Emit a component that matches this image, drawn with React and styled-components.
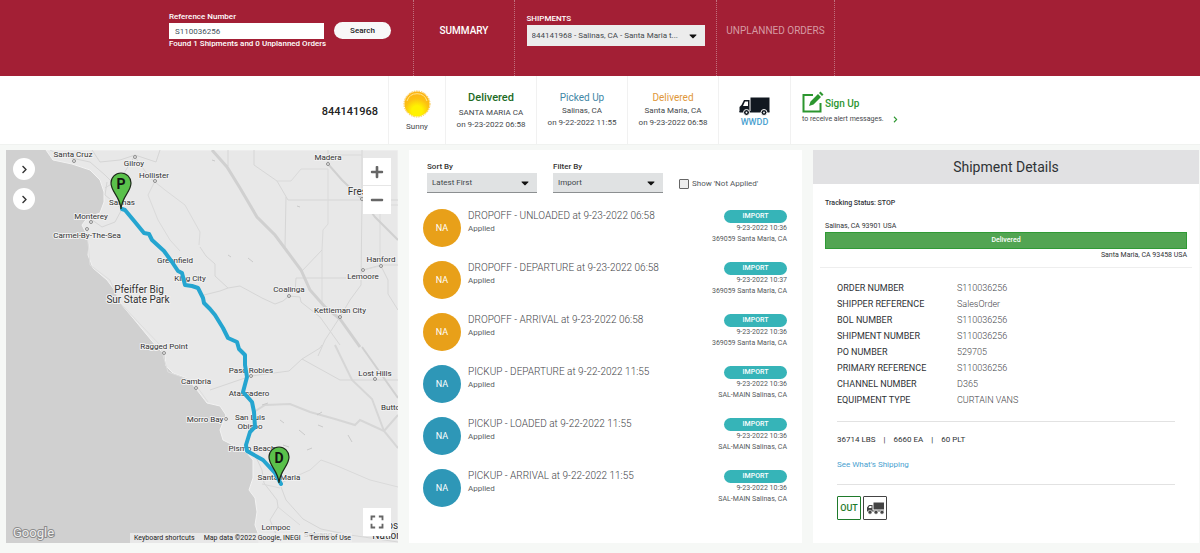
import React from 'react'
import styled, { createGlobalStyle } from 'styled-components'
import { FaCaretDown, FaChevronRight, FaMinus, FaPlus } from 'react-icons/fa'
import { MdFullscreen } from 'react-icons/md'

const GlobalStyle = createGlobalStyle`
    * {
        box-sizing:border-box;
    }
    body {
        margin:0;
        background-color:#f6f8f6;
        color:#2f3336;
        font-family:Roboto, "Liberation Sans", sans-serif;
        font-size:8px;
        line-height:12px;
    }
    button, input, select {
        font-family:inherit;
        margin:0;
    }
    h1, h2, h3, p, ul, dl, dd {
        margin:0;
        padding:0;
    }
`

/* top bar */

const TopBar = styled.header`
    display:grid;
    grid-template-columns:minmax(391px, 414fr) 101px 202px 118px minmax(0, 365fr);
    min-height:76px;
    background-color:#a31f35;
    color:#fff;
`

const TopCell = styled.div`
    display:flex;
    justify-content:${({ $justify }) => $justify || 'center'};
    align-items:flex-start;
    padding:${({ $padding }) => $padding || '0'};
    border-right:${({ $last }) => ($last ? 'none' : '1px dotted #c0707d')};
`

const SearchForm = styled.form`
    display:flex;
    gap:10px;
`

const Field = styled.div`
    display:flex;
    flex-direction:column;
    width:${({ $width }) => $width}px;
`

const TopLabel = styled.label`
    font-size:8px;
    line-height:12px;
    font-weight:500;
`

const SearchInput = styled.input`
    width:100%;
    height:16px;
    padding:0 6px;
    border:none;
    background-color:#fff;
    color:#44525c;
    font-size:8px;
`

const FoundText = styled.p`
    font-size:8px;
    line-height:10px;
    font-weight:500;
    white-space:nowrap;
`

const SearchButton = styled.button`
    align-self:flex-start;
    width:57px;
    height:17px;
    margin-top:11px;
    padding:0;
    border:none;
    border-radius:9px;
    background-color:#f8f8f8;
    color:#222;
    font-size:8px;
    font-weight:500;
`

const TopLink = styled.a`
    color:${({ $dim }) => ($dim ? '#d69aa3' : '#fff')};
    font-size:10px;
    line-height:12px;
    font-weight:${({ $dim }) => ($dim ? 400 : 500)};
    text-decoration:none;
    white-space:nowrap;
`

/* select with its own arrow */

const SelectWrap = styled.div`
    display:grid;
    align-items:center;
    height:${({ $tall }) => ($tall ? 21 : 20)}px;
    background-color:${({ $tall }) => ($tall ? '#ececec' : '#e0e2e3')};
    border-bottom:${({ $tall }) => ($tall ? 'none' : '1px solid #8c8f91')};
    color:#111;

    > * {
        grid-area:1 / 1;
    }
    > svg {
        justify-self:end;
        margin-right:6px;
        pointer-events:none;
    }
`

const Select = styled.select`
    appearance:none;
    width:100%;
    height:100%;
    padding:0 17px 0 5px;
    border:none;
    border-radius:0;
    background:transparent;
    color:#43484c;
    font-size:8px;
    text-overflow:ellipsis;
`

/* status strip */

const StatusStrip = styled.section`
    display:grid;
    grid-template-columns:minmax(0, 389fr) 57px 91px 91px 91px 72px minmax(0, 409fr);
    min-height:69px;
    background-color:#fff;
    border-bottom:1px solid #f0f2f0;
`

const StatusCell = styled.div`
    display:flex;
    flex-direction:column;
    align-items:${({ $align }) => $align || 'center'};
    gap:${({ $gap }) => $gap || 0}px;
    padding:${({ $padding }) => $padding || '15px 0 0'};
    border-right:${({ $last }) => ($last ? 'none' : '1px solid #f1f1f1')};
    white-space:nowrap;
`

const ShipmentNumber = styled.h1`
    color:#222;
    font-size:11px;
    line-height:14px;
    font-weight:500;
`

const StatusTitle = styled.h2`
    margin-bottom:${({ $bold }) => ($bold ? 2 : 0)}px;
    color:${({ $color }) => $color};
    font-size:${({ $bold }) => ($bold ? 11 : 10)}px;
    line-height:14px;
    font-weight:${({ $bold }) => ($bold ? 500 : 400)};
`

const StatusText = styled.p`
    color:#44484b;
    font-size:8px;
    line-height:12px;
`

const Carrier = styled.a`
    color:#4a9fd0;
    font-size:9px;
    line-height:12px;
    font-weight:500;
    text-decoration:none;
`

const SignUpLink = styled.a`
    display:flex;
    align-items:flex-end;
    gap:1px;
    color:#2c962f;
    font-size:10px;
    line-height:18px;
    font-weight:500;
    text-decoration:none;
`

const SignUpNote = styled.p`
    display:flex;
    align-items:center;
    gap:8px;
    color:#44484b;
    font-size:7px;
    line-height:12px;

    svg {
        color:#2c962f;
    }
`

/* panels */

const Panels = styled.main`
    display:grid;
    grid-template-columns:minmax(0, 392fr) minmax(0, 393fr) minmax(0, 386fr);
    gap:11px;
    padding:5px 1px 10px 6px;
`

const Panel = styled.section`
    min-height:393px;
    background-color:#fff;
`

const MapPanel = styled(Panel)`
    position:relative;
    overflow:hidden;
    background-color:#d0d0d0;
`

const MapDrawing = styled.svg`
    position:absolute;
    width:100%;
    height:100%;
`

const MapTools = styled.div`
    position:absolute;
    display:flex;
    flex-direction:column;
    gap:${({ $gap }) => $gap || 0}px;
    ${({ $place }) => $place}
`

const RoundButton = styled.button`
    display:flex;
    justify-content:center;
    align-items:center;
    width:22px;
    height:22px;
    padding:0;
    border:none;
    border-radius:50%;
    background-color:#fff;
    color:#333;
`

const SquareButton = styled.button`
    display:flex;
    justify-content:center;
    align-items:center;
    width:28px;
    height:28px;
    padding:0;
    border:none;
    border-bottom:${({ $divided }) => ($divided ? '1px solid #e6e6e6' : 'none')};
    background-color:#fff;
    color:#666;
`

const GoogleMark = styled.a`
    position:absolute;
    left:7px;
    bottom:1px;
    color:#eee;
    font-size:13px;
    line-height:18px;
    text-decoration:none;
    -webkit-text-stroke:2px #8c8c8c;
    paint-order:stroke fill;
`

const MapCredits = styled.div`
    position:absolute;
    right:46px;
    bottom:0;
    display:flex;
    gap:9px;
    padding:0 1px 0 4px;
    background-color:rgba(238,238,238,0.8);
    color:#222;
    font-size:7px;
    line-height:10px;
    white-space:nowrap;

    a {
        color:inherit;
        text-decoration:none;
    }
`

const MapLabel = styled.text`
    fill:#333;
    stroke:#f1f1f1;
    stroke-width:2px;
    stroke-linejoin:round;
    paint-order:stroke;
    font-size:${({ $big }) => ($big ? 10 : 8)}px;
    text-anchor:middle;
`

/* event list */

const Filters = styled.div`
    display:flex;
    align-items:flex-end;
    gap:16px;
    padding:11px 14px 0 18px;
`

const FilterField = styled(Field)`
    width:110px;
`

const FilterLabel = styled.label`
    color:#333;
    font-size:8px;
    line-height:12px;
    font-weight:500;
`

const CheckLabel = styled.label`
    display:flex;
    align-items:center;
    gap:3px;
    color:#55595c;
    font-size:8px;
    line-height:18px;
    white-space:nowrap;
`

const CheckBox = styled.input`
    appearance:none;
    width:10px;
    height:10px;
    margin:0;
    border:1px solid #666;
    border-radius:1px;
    background-color:#eee;
`

const EventList = styled.ul`
    display:flex;
    flex-direction:column;
    gap:14px;
    padding:16px 15px 0 14px;
    list-style:none;
`

const EventRow = styled.li`
    display:flex;
    gap:7px;
    height:38px;
`

const Avatar = styled.span`
    display:flex;
    justify-content:center;
    align-items:center;
    flex:none;
    width:38px;
    height:38px;
    border-radius:50%;
    background-color:${({ $pickup }) => ($pickup ? '#2e97b7' : '#e8a019')};
    color:#fff;
    font-size:9px;
`

const EventBody = styled.div`
    flex:1;
    min-width:0;
`

const EventTitle = styled.h3`
    color:#3f4448;
    font-size:10px;
    line-height:14px;
    font-weight:300;
`

const EventState = styled.p`
    color:#5a5f63;
    font-size:8px;
    line-height:12px;
`

const EventSide = styled.div`
    display:flex;
    flex-direction:column;
    align-items:flex-end;
    padding-top:1px;
    color:#55595c;
    font-size:7px;
    line-height:11px;
`

const Tag = styled.span`
    width:63px;
    border-radius:7px;
    background-color:#36b4b8;
    color:#fff;
    font-size:7px;
    line-height:13px;
    font-weight:500;
    text-align:center;
`

/* shipment details */

const DetailsTitle = styled.h2`
    background-color:#e1e1e3;
    color:#2f3336;
    font-size:14px;
    line-height:34px;
    font-weight:400;
    text-align:center;
`

const Tracking = styled.div`
    margin:0 7px;
    padding:13px 5px 6px;
    border-bottom:1px solid #eee;
    font-size:7px;
    line-height:12px;
`

const TrackingStatus = styled.p`
    margin-bottom:11px;
    font-weight:500;
`

const Progress = styled.div`
    border:1px solid #2f9a35;
    background-color:#52a552;
    color:#fff;
    line-height:15px;
    font-weight:500;
    text-align:center;
`

const Destination = styled.p`
    text-align:right;
`

const DetailsBody = styled.div`
    padding:12px 24px 0;
`

const DataList = styled.dl`
    display:grid;
    grid-template-columns:120px 1fr;
    padding-bottom:13px;
    border-bottom:1px solid #e2e2e2;
    font-size:9px;
    line-height:16px;

    dd {
        color:#3f4448;
        font-weight:300;
    }
`

const Totals = styled.p`
    display:flex;
    gap:8px;
    padding:12px 0 13px;
`

const DetailsLink = styled.a`
    display:block;
    padding-bottom:13px;
    border-bottom:1px solid #e2e2e2;
    color:#4a9fd0;
    font-size:8px;
    text-decoration:none;
`

const Badges = styled.div`
    display:flex;
    gap:2px;
    padding-top:11px;
`

const Badge = styled.span`
    display:flex;
    justify-content:center;
    align-items:center;
    width:24px;
    height:24px;
    border:1px solid ${({ $color }) => $color};
    border-radius:1px;
    color:${({ $color }) => $color};
    font-size:9px;
    font-weight:500;
`

const events = [
    { title: 'DROPOFF - UNLOADED at 9-23-2022 06:58', time: '9-23-2022 10:36', place: '369059 Santa Maria, CA' },
    { title: 'DROPOFF - DEPARTURE at 9-23-2022 06:58', time: '9-23-2022 10:37', place: '369059 Santa Maria, CA' },
    { title: 'DROPOFF - ARRIVAL at 9-23-2022 06:58', time: '9-23-2022 10:36', place: '369059 Santa Maria, CA' },
    { title: 'PICKUP - DEPARTURE at 9-22-2022 11:55', time: '9-23-2022 10:36', place: 'SAL-MAIN Salinas, CA', pickup: true },
    { title: 'PICKUP - LOADED at 9-22-2022 11:55', time: '9-23-2022 10:36', place: 'SAL-MAIN Salinas, CA', pickup: true },
    { title: 'PICKUP - ARRIVAL at 9-22-2022 11:55', time: '9-23-2022 10:36', place: 'SAL-MAIN Salinas, CA', pickup: true },
]

const details = [
    ['ORDER NUMBER', 'S110036256'],
    ['SHIPPER REFERENCE', 'SalesOrder'],
    ['BOL NUMBER', 'S110036256'],
    ['SHIPMENT NUMBER', 'S110036256'],
    ['PO NUMBER', '529705'],
    ['PRIMARY REFERENCE', 'S110036256'],
    ['CHANNEL NUMBER', 'D365'],
    ['EQUIPMENT TYPE', 'CURTAIN VANS'],
]

// label, x, y, big
const places = [
    ['Santa Cruz', 73, 157],
    ['Gilroy', 134, 166],
    ['Hollister', 154, 178],
    ['Salinas', 122, 205],
    ['Monterey', 91, 219],
    ['Carmel-By-The-Sea', 87, 238],
    ['Greenfield', 175, 263],
    ['King City', 190, 281],
    ['Pfeiffer Big', 139, 293, true],
    ['Sur State Park', 138, 303, true],
    ['Ragged Point', 164, 349],
    ['Cambria', 196, 384],
    ['Morro Bay', 205, 422],
    ['Paso Robles', 251, 373],
    ['Atascadero', 249, 396],
    ['San Luis', 250, 420],
    ['Obispo', 250, 429],
    ['Pismo Beach', 252, 451],
    ['Santa Maria', 279, 480],
    ['Lompoc', 276, 530],
    ['Solvang', 318, 537],
    ['Madera', 328, 160],
    ['Fresno', 363, 195, true],
    ['Hanford', 381, 262],
    ['Lemoore', 363, 279],
    ['Coalinga', 289, 292],
    ['Kettleman City', 340, 313],
    ['Lost Hills', 375, 376],
    ['Buttonwillow', 404, 410],
    ['Los', 390, 529, true],
    ['National', 391, 539, true],
]

const towns = [
    [74, 161], [135, 157], [155, 181], [91, 222], [87, 229], [328, 164], [362, 199], [381, 266],
    [363, 270], [289, 296], [340, 317], [375, 379], [164, 353], [196, 388], [226, 419], [251, 376],
]

const Pin = ({ x, y, letter }) => (
    <g transform={`translate(${x} ${y})`}>
        <path d="M0 0 C-1 -13 -10 -17 -10 -26 A10 10 0 0 1 10 -26 C10 -17 1 -13 0 0 Z" fill="#5ac14b" stroke="#1d2a1a" strokeWidth="1.2" />
        <text y="-20" textAnchor="middle" fontSize="14" fontWeight="700" fill="#111">{letter}</text>
    </g>
)

const Truck = () => (
    <svg width="31" height="19" viewBox="0 0 31 19" fill="#111820" aria-hidden="true">
        <path d="M11.5 0.500 H30.500 V14.500 H11.500 Z" />
        <path d="M10.500 3 H5 L2.500 8 L0.500 10 V15 H10.500 Z M9 4.500 V9 H4 L6 4.500 Z" fillRule="evenodd" />
        <path d="M0.500 14 H30.500 V15.500 H0.500 Z" />
        <circle cx="7.500" cy="15.500" r="3" stroke="#fff" />
        <circle cx="25" cy="15.500" r="3" stroke="#fff" />
        <circle cx="7.500" cy="15.500" r="0.900" fill="#fff" />
        <circle cx="25" cy="15.500" r="0.900" fill="#fff" />
    </svg>
)

const SmallTruck = () => (
    <svg width="19" height="13" viewBox="0 0 19 13" fill="#444" aria-hidden="true">
        <path d="M7.500 0.500 H18 V7.500 H7.500 Z" />
        <path d="M6.500 3 H3 L1 5.500 V9.500 H18 V8.500 H6.500 Z M5.500 4 V6 H2.500 L3.500 4 Z" fillRule="evenodd" />
        <circle cx="4" cy="10.200" r="2" stroke="#fff" strokeWidth="0.600" />
        <circle cx="10" cy="10.200" r="2" stroke="#fff" strokeWidth="0.600" />
        <circle cx="16" cy="10.200" r="2" stroke="#fff" strokeWidth="0.600" />
    </svg>
)

const SignUpIcon = () => (
    <svg width="22" height="22" viewBox="0 0 22 22" aria-hidden="true">
        <path d="M11 4 H1.500 V20.500 H18.500 V12" fill="none" stroke="#2c962f" strokeWidth="2" />
        <path d="M7 15 L8.500 10.500 L16 3 L19 6 L11.500 13.500 Z M17 2 L18.500 0.500 L21.500 3.500 L20 5 Z" fill="#2c962f" />
    </svg>
)

const Sun = () => (
    <svg width="28" height="28" viewBox="0 0 28 28" aria-hidden="true">
        <defs>
            <radialGradient id="sun" cx="50%" cy="78%" r="70%">
                <stop offset="0.3" stopColor="#fff200" />
                <stop offset="0.7" stopColor="#fcc012" />
                <stop offset="1" stopColor="#fdb515" />
            </radialGradient>
        </defs>
        <circle cx="14" cy="14" r="13" fill="none" stroke="#f9c440" strokeDasharray="1.5 1" />
        <circle cx="14" cy="14" r="12.500" fill="url(#sun)" />
        <path d="M4 11 A10.500 10.500 0 0 1 24 11" fill="none" stroke="#ffe58a" />
    </svg>
)

const Dropdown = ({ id, options, tall }) => (
    <SelectWrap $tall={tall}>
        <Select id={id}>
            {options.map((option) => <option key={option}>{option}</option>)}
        </Select>
        <FaCaretDown size={12} />
    </SelectWrap>
)

const RouteMap = () => (
    <MapDrawing viewBox="6 150 392 393" preserveAspectRatio="xMidYMid slice" role="img" aria-label="Route from Salinas to Santa Maria">
        <path
            d="M46 150 L53 160 L72 164 L90 170 L100 180 L104 192 L104 202 L100 213 L88 217 L82 225 L87 235 L89 245 L88 255 L93 268 L107 280 L113 288 L122 305 L133 318 L147 335 L157 347 L165 355 L166 366 L173 373 L187 378 L197 390 L207 403 L220 406 L226 415 L220 430 L223 440 L237 447 L247 453 L253 460 L253 478 L249 490 L255 498 L257 512 L255 525 L258 533 L259 543 H398 V150 Z"
            fill="#e8e8e8"
            stroke="#f2f2f2"
        />
        <g fill="none" stroke="#d6d6d6" strokeWidth="1">
            <path d="M50 150 L62 156 L90 162 L105 175 L120 190 L122 209" />
            <path d="M92 150 L100 162 L120 160 L135 155 L156 162 L160 150 M105 188 L121 178 L134 157 M88 217 L102 227 L115 222 L122 209 M122 209 L105 195 L107 182" />
            <path d="M135 157 L150 178 L165 190 L185 205 L200 232 L199 245 M155 181 L148 195 L158 220 L170 240 L180 251" stroke="#dadada" />
            <path d="M87 230 L90 265 L110 280 L120 303 L160 345 L168 372 L193 381 L208 402" stroke="#dedede" />
            <path d="M200 247 L206 256 L215 264 L215 276 L228 288 M204 295 L220 291 L228 288 L240 286 L262 298 L275 304 L283 301 L289 296 L300 297 L301 302 L320 317 L340 345" />
            <path d="M228 150 V166 M254 150 V165 L277 181 L288 200 H398 M286 197 L285 247" />
            <path d="M277 181 H291 L301 169 H328 V224 L323 230 L322 250 V305" stroke="#dadada" />
            <path d="M328 164 V150 M362 150 V199 L361 285 L350 300 L340 317 L325 340 L318 356" />
            <path d="M296 278 H346 M301 272 L322 250 M296 278 L295 293 M363 270 L381 265 H398 M381 266 L388 280 V294 L398 310" />
            <path d="M398 205 H365 M380 200 V266 L363 270 M330 155 H362" stroke="#dadada" />
            <path d="M251 376 L289 371 L302 359 L320 348 L322 345 M245 378 L210 390 M302 359 L340 380 H398" />
            <path d="M335 345 L352 380 L372 399 L384 431 L398 448 M384 431 L398 415" strokeWidth="2" />
            <path d="M254 412 L265 405 L290 404 L310 412 L335 419 L355 425 L360 420 L384 431" strokeWidth="2" />
            <path d="M255 455 L262 470 L264 483 L277 500 L278 507 L270 520 L276 534 M281 487 L286 500 L303 519 L321 529 L350 535 L398 542" />
            <path d="M281 483 L310 470 L321 460 L335 465 L370 480 L398 487 M262 484 L280 488 M278 507 L300 525" stroke="#dadada" />
        </g>
        <g fill="none" stroke="#d0d0d0" strokeWidth="3">
            <path d="M212 150 L227 167 L240 188 L257 217 L275 235 L301 270 L310 290 L325 307 L340 319 L360 347" />
            <path d="M362 347 L398 398 M328 164 L342 180 L362 199 L375 217 L398 240" strokeWidth="2" />
        </g>
        <path d="M297 206 l3 1 M212 160 l3 1 M228 255 l3 2 M248 258 l5 4 M262 405 l6 -2 M299 430 l6 5 M348 435 l4 7 M318 425 l5 2 M280 420 l4 3 M307 450 l5 -2 M283 445 l6 2 M317 415 l5 -3" stroke="#cacaca" fill="none" />
        {towns.map(([x, y]) => (
            <circle key={`${x}-${y}`} cx={x} cy={y} r="1.500" fill="#e8e8e8" stroke="#777" strokeWidth="0.800" />
        ))}
        {places.map(([label, x, y, big]) => (
            <MapLabel key={label} x={x} y={y} $big={big}>{label}</MapLabel>
        ))}
        <path
            d="M122 209 L125 210 L135 222 L144 233 L149 234 L152 240 L164 251 L172 262 L178 271 L182 273 L185 285 L192 286 L198 288 L203 298 L204 303 L210 309 L215 315 L223 328 L228 338 L237 342 L239 349 L245 355 L245 365 L247 377 L243 392 L252 402 L254 412 L255 427 L250 432 L246 445 L247 451 L263 460 L275 473 L281 484"
            fill="none"
            stroke="#25a5d0"
            strokeWidth="4"
            strokeLinejoin="round"
            strokeLinecap="round"
        />
        <Pin x={121} y={209} letter="P" />
        <Pin x={279} y={483} letter="D" />
    </MapDrawing>
)

const App = () => {
    return (
        <>
            <GlobalStyle />
            <TopBar>
                <TopCell $justify="flex-end" $padding="11px 22px 0 0">
                    <SearchForm>
                        <Field $width={155}>
                            <TopLabel htmlFor="reference">Reference Number</TopLabel>
                            <SearchInput id="reference" defaultValue="S110036256" />
                            <FoundText>Found 1 Shipments and 0 Unplanned Orders</FoundText>
                        </Field>
                        <SearchButton type="button">Search</SearchButton>
                    </SearchForm>
                </TopCell>
                <TopCell $padding="25px 0 0">
                    <TopLink href="#summary">SUMMARY</TopLink>
                </TopCell>
                <TopCell $padding="13px 0 0">
                    <Field $width={178}>
                        <TopLabel htmlFor="shipments">SHIPMENTS</TopLabel>
                        <Dropdown id="shipments" tall options={['844141968 - Salinas, CA - Santa Maria t...']} />
                    </Field>
                </TopCell>
                <TopCell $padding="25px 0 0">
                    <TopLink href="#unplanned" $dim>UNPLANNED ORDERS</TopLink>
                </TopCell>
                <TopCell $last />
            </TopBar>

            <StatusStrip>
                <StatusCell $align="flex-end" $padding="29px 10px 0 0">
                    <ShipmentNumber>844141968</ShipmentNumber>
                </StatusCell>
                <StatusCell $padding="14px 0 0" $gap={3}>
                    <Sun />
                    <StatusText>Sunny</StatusText>
                </StatusCell>
                <StatusCell>
                    <StatusTitle $color="#1d6b26" $bold>Delivered</StatusTitle>
                    <StatusText>SANTA MARIA CA</StatusText>
                    <StatusText>on 9-23-2022 06:58</StatusText>
                </StatusCell>
                <StatusCell>
                    <StatusTitle $color="#3f87a6">Picked Up</StatusTitle>
                    <StatusText>Salinas, CA</StatusText>
                    <StatusText>on 9-22-2022 11:55</StatusText>
                </StatusCell>
                <StatusCell>
                    <StatusTitle $color="#e0973a">Delivered</StatusTitle>
                    <StatusText>Santa Maria, CA</StatusText>
                    <StatusText>on 9-23-2022 06:58</StatusText>
                </StatusCell>
                <StatusCell $padding="21px 0 0">
                    <Truck />
                    <Carrier href="#carrier">WWDD</Carrier>
                </StatusCell>
                <StatusCell $align="flex-start" $padding="15px 0 0 11px" $last>
                    <SignUpLink href="#signup">
                        <SignUpIcon />
                        Sign Up
                    </SignUpLink>
                    <SignUpNote>
                        to receive alert messages.
                        <FaChevronRight size={7} />
                    </SignUpNote>
                </StatusCell>
            </StatusStrip>

            <Panels>
                <MapPanel>
                    <RouteMap />
                    <MapTools $gap={8} $place="top:8px; left:7px;">
                        <RoundButton aria-label="Show stops"><FaChevronRight size={9} /></RoundButton>
                        <RoundButton aria-label="Show layers"><FaChevronRight size={9} /></RoundButton>
                    </MapTools>
                    <MapTools $place="top:8px; right:7px;">
                        <SquareButton aria-label="Zoom in" $divided><FaPlus size={14} /></SquareButton>
                        <SquareButton aria-label="Zoom out"><FaMinus size={14} /></SquareButton>
                    </MapTools>
                    <GoogleMark href="#google">Google</GoogleMark>
                    <MapCredits>
                        <a href="#shortcuts">Keyboard shortcuts</a>
                        <span>Map data ©2022 Google, INEGI</span>
                        <a href="#terms">Terms of Use</a>
                    </MapCredits>
                    <MapTools $place="right:7px; bottom:7px;">
                        <SquareButton aria-label="Full screen"><MdFullscreen size={22} /></SquareButton>
                    </MapTools>
                </MapPanel>

                <Panel>
                    <Filters>
                        <FilterField>
                            <FilterLabel htmlFor="sort">Sort By</FilterLabel>
                            <Dropdown id="sort" options={['Latest First']} />
                        </FilterField>
                        <FilterField>
                            <FilterLabel htmlFor="filter">Filter By</FilterLabel>
                            <Dropdown id="filter" options={['Import']} />
                        </FilterField>
                        <CheckLabel>
                            <CheckBox type="checkbox" />
                            Show 'Not Applied'
                        </CheckLabel>
                    </Filters>
                    <EventList>
                        {events.map(({ title, time, place, pickup }) => (
                            <EventRow key={title}>
                                <Avatar $pickup={pickup}>NA</Avatar>
                                <EventBody>
                                    <EventTitle>{title}</EventTitle>
                                    <EventState>Applied</EventState>
                                </EventBody>
                                <EventSide>
                                    <Tag>IMPORT</Tag>
                                    <span>{time}</span>
                                    <span>{place}</span>
                                </EventSide>
                            </EventRow>
                        ))}
                    </EventList>
                </Panel>

                <Panel>
                    <DetailsTitle>Shipment Details</DetailsTitle>
                    <Tracking>
                        <TrackingStatus>Tracking Status: STOP</TrackingStatus>
                        <p>Salinas, CA 93901 USA</p>
                        <Progress>Delivered</Progress>
                        <Destination>Santa Maria, CA 93458 USA</Destination>
                    </Tracking>
                    <DetailsBody>
                        <DataList>
                            {details.map(([name, value]) => (
                                <React.Fragment key={name}>
                                    <dt>{name}</dt>
                                    <dd>{value}</dd>
                                </React.Fragment>
                            ))}
                        </DataList>
                        <Totals>
                            <span>36714 LBS</span>
                            <span>|</span>
                            <span>6660 EA</span>
                            <span>|</span>
                            <span>60 PLT</span>
                        </Totals>
                        <DetailsLink href="#contents">See What's Shipping</DetailsLink>
                        <Badges>
                            <Badge $color="#1f7a2b">OUT</Badge>
                            <Badge $color="#444"><SmallTruck /></Badge>
                        </Badges>
                    </DetailsBody>
                </Panel>
            </Panels>
        </>
    )
}

export default App
